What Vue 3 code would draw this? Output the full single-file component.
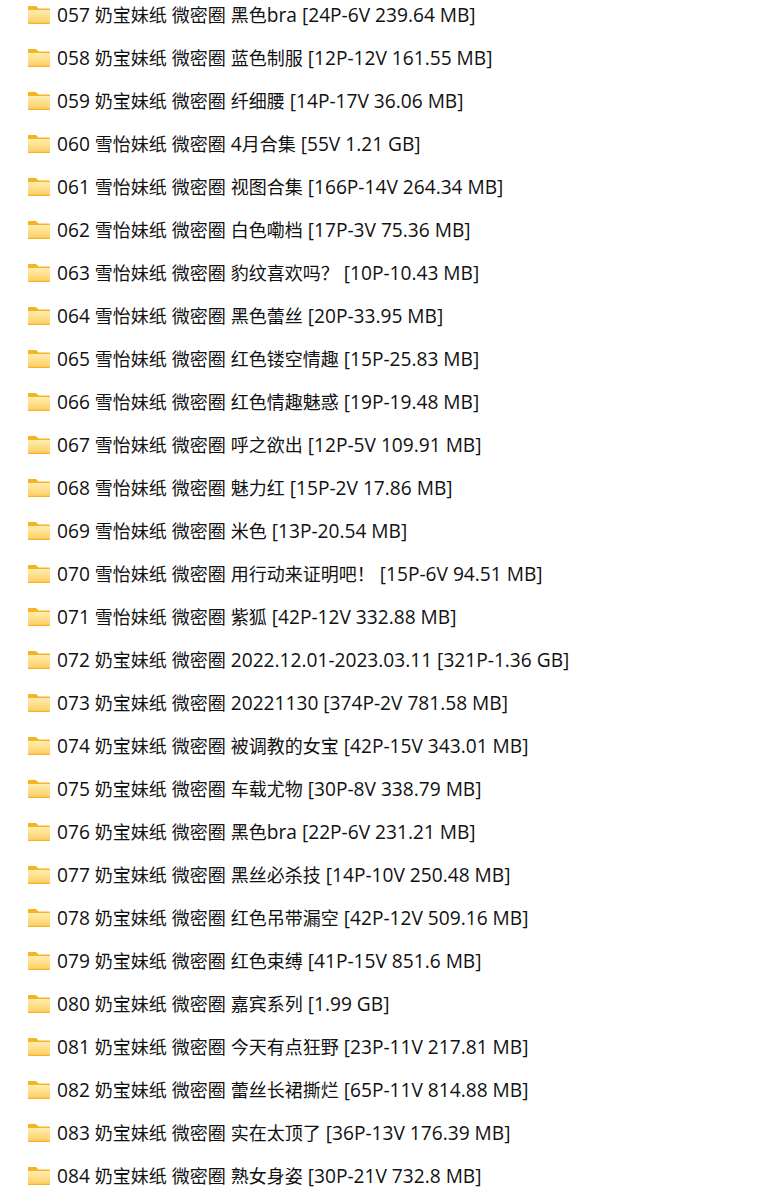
<script setup>
const folders = [
  '057 奶宝妹纸 微密圈 黑色bra [24P-6V 239.64 MB]',
  '058 奶宝妹纸 微密圈 蓝色制服 [12P-12V 161.55 MB]',
  '059 奶宝妹纸 微密圈 纤细腰 [14P-17V 36.06 MB]',
  '060 雪怡妹纸 微密圈 4月合集 [55V 1.21 GB]',
  '061 雪怡妹纸 微密圈 视图合集 [166P-14V 264.34 MB]',
  '062 雪怡妹纸 微密圈 白色嘞档 [17P-3V 75.36 MB]',
  '063 雪怡妹纸 微密圈 豹纹喜欢吗？ [10P-10.43 MB]',
  '064 雪怡妹纸 微密圈 黑色蕾丝 [20P-33.95 MB]',
  '065 雪怡妹纸 微密圈 红色镂空情趣 [15P-25.83 MB]',
  '066 雪怡妹纸 微密圈 红色情趣魅惑 [19P-19.48 MB]',
  '067 雪怡妹纸 微密圈 呼之欲出 [12P-5V 109.91 MB]',
  '068 雪怡妹纸 微密圈 魅力红 [15P-2V 17.86 MB]',
  '069 雪怡妹纸 微密圈 米色 [13P-20.54 MB]',
  '070 雪怡妹纸 微密圈 用行动来证明吧！ [15P-6V 94.51 MB]',
  '071 雪怡妹纸 微密圈 紫狐 [42P-12V 332.88 MB]',
  '072 奶宝妹纸 微密圈 2022.12.01-2023.03.11 [321P-1.36 GB]',
  '073 奶宝妹纸 微密圈 20221130 [374P-2V 781.58 MB]',
  '074 奶宝妹纸 微密圈 被调教的女宝 [42P-15V 343.01 MB]',
  '075 奶宝妹纸 微密圈 车载尤物 [30P-8V 338.79 MB]',
  '076 奶宝妹纸 微密圈 黑色bra [22P-6V 231.21 MB]',
  '077 奶宝妹纸 微密圈 黑丝必杀技 [14P-10V 250.48 MB]',
  '078 奶宝妹纸 微密圈 红色吊带漏空 [42P-12V 509.16 MB]',
  '079 奶宝妹纸 微密圈 红色束缚 [41P-15V 851.6 MB]',
  '080 奶宝妹纸 微密圈 嘉宾系列 [1.99 GB]',
  '081 奶宝妹纸 微密圈 今天有点狂野 [23P-11V 217.81 MB]',
  '082 奶宝妹纸 微密圈 蕾丝长裙撕烂 [65P-11V 814.88 MB]',
  '083 奶宝妹纸 微密圈 实在太顶了 [36P-13V 176.39 MB]',
  '084 奶宝妹纸 微密圈 熟女身姿 [30P-21V 732.8 MB]',
]

// latin glyphs run larger than the CJK ones in this listing
function splitRuns(name) {
  return name.match(/[\u3000-\u9fff\uff00-\uffef]+|[^\u3000-\u9fff\uff00-\uffef]+/g)
}

function isCjk(run) {
  return /[\u3000-\u9fff\uff00-\uffef]/.test(run)
}
</script>

<template>
  <div class="folder-list">
    <div v-for="name in folders" :key="name" class="folder-row">
      <svg class="folder-icon" width="22" height="18" viewBox="0 0 22 18">
        <defs>
          <linearGradient id="folderBody" x1="0" y1="0" x2="0" y2="1">
            <stop offset="0" stop-color="#ffeeb0" />
            <stop offset="1" stop-color="#fdd068" />
          </linearGradient>
        </defs>
        <path d="M0 1C0 .4.4 0 1 0H7.500c.4 0 .7.1 1 .4L10.500 2.500H21c.6 0 1 .4 1 1V17c0 .6-.4 1-1 1H1c-.6 0-1-.4-1-1Z" fill="#f6b425" />
        <path d="M0 4.800C0 4.300.3 4 .8 4H21.200c.5 0 .8.3.8.8V16.800H0Z" fill="url(#folderBody)" />
      </svg>
      <span class="folder-name"><span
          v-for="(run, index) in splitRuns(name)"
          :key="index"
          :class="{ cjk: isCjk(run) }"
      >{{ run }}</span></span>
    </div>
  </div>
</template>

<style>
body {
  background: #fff;
}
</style>

<style scoped>
.folder-list {
  height: 1195px;
  overflow: hidden;
  padding-left: 28px;
  display: flex;
  flex-direction: column;
  gap: 16px;
  padding-top: 1px;
  box-sizing: border-box;
}

.folder-row {
  display: flex;
  align-items: center;
  gap: 7px;
  height: 27px;
  flex-shrink: 0;
}

.folder-icon {
  flex-shrink: 0;
}

.folder-name {
  color: #111;
  font-family: "Open Sans", "Noto Sans CJK SC", sans-serif;
  font-size: 19.15px;
  line-height: 27px;
  padding-top: 2px;
  white-space: pre;
}

.cjk {
  font-size: 18px;
}
</style>
